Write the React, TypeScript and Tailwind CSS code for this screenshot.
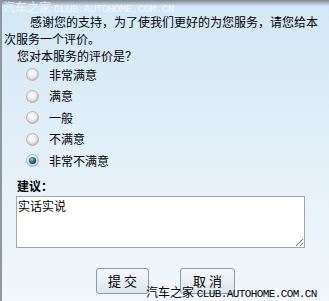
import React from 'react';

const OPTIONS = ['非常满意', '满意', '一般', '不满意', '非常不满意'];

function Radio({ checked }: { checked: boolean }) {
  return (
    <svg width="13" height="13" viewBox="0 0 13 13" className="shrink-0">
      <defs>
        <radialGradient id="rOff" cx="0.45" cy="0.4" r="0.6">
          <stop offset="0" stopColor="#ffffff" />
          <stop offset="0.55" stopColor="#eeeeee" />
          <stop offset="1" stopColor="#b9b9b9" />
        </radialGradient>
        <radialGradient id="rOn" cx="0.4" cy="0.35" r="0.65">
          <stop offset="0" stopColor="#8fd0ee" />
          <stop offset="0.5" stopColor="#2a7fa8" />
          <stop offset="1" stopColor="#0b3d58" />
        </radialGradient>
      </defs>
      <circle cx="6.5" cy="6.5" r="6" fill="url(#rOff)" stroke="#a9a9a9" strokeWidth="0.8" />
      {checked && <circle cx="6.5" cy="6.5" r="3.6" fill="url(#rOn)" />}
    </svg>
  );
}

function Mark({ className }: { className: string }) {
  return (
    <div className={`absolute text-[12px] leading-[12px] whitespace-nowrap ${className}`}>
      汽车之家{' '}
      <span
        style={{ fontFamily: '"Liberation Mono", monospace' }}
        className="text-[11px] tracking-[-0.6px]"
      >
        CLUB.AUTOHOME.COM.CN
      </span>
    </div>
  );
}

export default function App() {
  const font = { fontFamily: '"Noto Sans CJK SC", "Liberation Sans", sans-serif' };

  return (
    <div
      className="relative w-[329px] h-[301px] overflow-hidden border-l-2 border-[#8e989e] bg-gradient-to-b from-[#d2e7f5] via-[#e3f0f9] to-[#f1f7fc] text-black text-[12px]"
      style={font}
    >
      {/* top shade */}
      <div className="absolute left-0 right-0 top-0 h-[6px] bg-gradient-to-b from-[#7b868e] to-transparent" />
      <Mark className="left-[1px] top-[1px] text-white/70" />

      <div className="relative pt-[13px]">
        <p className="pl-[2px] pr-[6px] indent-[26px] leading-[17px]">
          感谢您的支持，为了使我们更好的为您服务，请您给本次服务一个评价。
        </p>
        <p className="pl-[15px] leading-[17px]">您对本服务的评价是？</p>

        <div className="flex flex-col">
          {OPTIONS.map((o, i) => (
            <label key={o} className="flex items-center h-[21.5px] pl-[24px] gap-[10px]">
              <Radio checked={i === OPTIONS.length - 1} />
              <span>{o}</span>
            </label>
          ))}
        </div>

        <p className="mt-[5px] pl-[15px] font-bold leading-[17px]">建议：</p>

        <textarea
          defaultValue="实话实说"
          className="block mt-[2px] ml-[14px] w-[289px] h-[52px] border border-[#a5a5a5] bg-white px-[1px] py-[2px] text-[12px] leading-[14px] outline-none"
          style={font}
        />

        <div className="flex mt-[20px] pl-[94px] gap-[31px]">
          <button className="w-[53px] h-[26px] rounded-[3px] border border-[#8c9aa6] bg-gradient-to-b from-[#f4f8fb] to-[#dde6ee] text-[13px] tracking-[3px] pl-[3px] text-black">
            提交
          </button>
          <button className="w-[55px] h-[26px] rounded-[3px] border border-[#8c9aa6] bg-gradient-to-b from-[#f4f8fb] to-[#dde6ee] text-[13px] tracking-[3px] pl-[3px] text-black leading-[20px]">
            取消
          </button>
        </div>
      </div>

      <Mark className="left-[144px] top-[286px] text-black" />
    </div>
  );
}
